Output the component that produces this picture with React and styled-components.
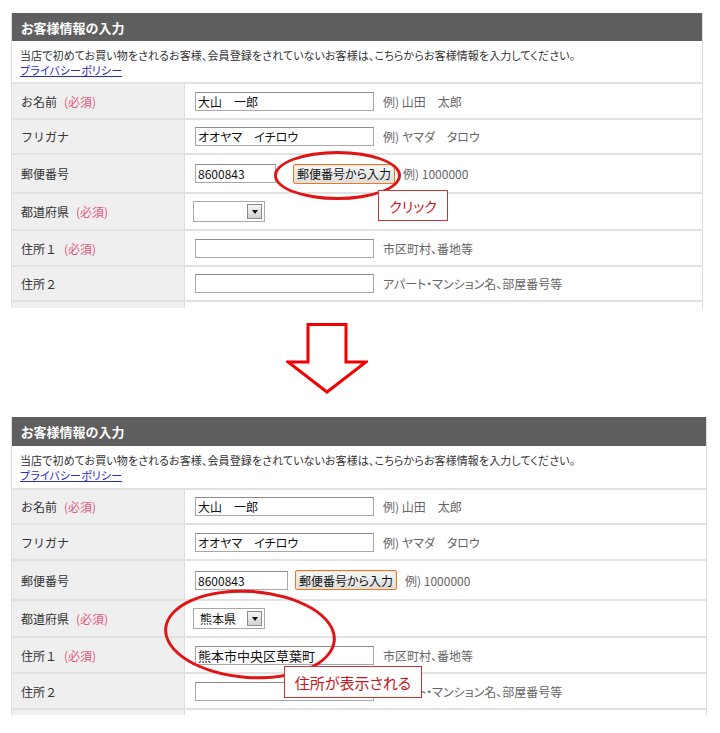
import React from 'react';
import styled, { createGlobalStyle } from 'styled-components';

const GlobalStyle = createGlobalStyle`
  html, body { margin: 0; padding: 0; background: #fff; }
  body {
    font-family: "Noto Sans CJK JP", "Noto Sans", sans-serif;
    font-size: 12px;
    color: #333;
    font-feature-settings: "palt";
  }
  * { box-sizing: border-box; }
`;

const Page = styled.div`
  width: 720px;
  height: 733px;
  overflow: hidden;
  padding: 13px 0 0 11px;
`;

const PanelWrap = styled.div`
  position: relative;
  width: ${(p) => p.$w}px;
`;

const Table = styled.div`
  height: ${(p) => p.$h}px;
  overflow: hidden;
  border-left: 1px solid #dcdcdc;
  border-right: 1px solid #dcdcdc;
`;

const Header = styled.div`
  height: ${(p) => p.$h}px;
  background: #5f5f5f;
  color: #fff;
  font-weight: bold;
  font-size: 13px;
  padding-left: 9px;
  display: flex;
  align-items: center;
`;

const Desc = styled.div`
  height: ${(p) => p.$h}px;
  padding: 7px 8px 0;
  font-size: 11px;
  letter-spacing: 0.1px;
  line-height: 15px;
  border-bottom: 2px solid #e2e2e2;
  color: #333;
`;

const Link = styled.a`
  color: #2b2bc6;
  text-decoration: underline;
`;

const Row = styled.div`
  display: grid;
  grid-template-columns: 173px 1fr;
  height: ${(p) => p.$h}px;
  border-bottom: 2px solid #e2e2e2;
`;

const Label = styled.div`
  background: #efefef;
  border-right: 1px solid #dcdcdc;
  display: flex;
  align-items: center;
  padding-left: 9px;
  gap: 7px;
  color: #333;
  font-feature-settings: normal;
`;

const Req = styled.span`
  color: #e3587c;
`;

const Value = styled.div`
  display: flex;
  align-items: center;
  padding-left: ${(p) => p.$pl ?? 10}px;
`;

const Input = styled.div`
  width: ${(p) => p.$w}px;
  height: 19px;
  border: 1px solid #a8a8a8;
  border-top-color: #8c8c8c;
  background: #fff;
  color: #111;
  display: flex;
  align-items: center;
  padding-left: 2px;
  font-size: ${(p) => p.$fs ?? 12}px;
  white-space: nowrap;
  margin-right: ${(p) => p.$mr ?? 9}px;
`;

const Hint = styled.span`
  color: #666;
  white-space: nowrap;
`;

const Button = styled.div`
  width: ${(p) => p.$w}px;
  height: 20px;
  border: 1px solid #e07a32;
  border-radius: 2px;
  background: linear-gradient(#f8f8f8, #dcdcdc);
  box-shadow: inset 0 0 0 1px #fbe0c8;
  color: #111;
  display: flex;
  align-items: center;
  justify-content: center;
  margin-right: ${(p) => p.$mr ?? 8}px;
  white-space: nowrap;
`;

const Select = styled.div`
  width: 72px;
  height: 21px;
  border: 1px solid #a8a8a8;
  background: #fff;
  display: flex;
  align-items: center;
  justify-content: space-between;
  padding: 0 2px 0 6px;
  color: #111;
`;

const DropBtn = styled.div`
  width: 15px;
  height: 15px;
  border: 1px solid #8a8a8a;
  background: linear-gradient(#f6f6f6, #d2d2d2);
  display: flex;
  align-items: center;
  justify-content: center;
  &::after {
    content: "";
    border-left: 3px solid transparent;
    border-right: 3px solid transparent;
    border-top: 4px solid #111;
  }
`;

const Ellipse = styled.div`
  position: absolute;
  left: ${(p) => p.$x}px;
  top: ${(p) => p.$y}px;
  width: ${(p) => p.$w}px;
  height: ${(p) => p.$h}px;
  border: 3px solid #e01414;
  border-radius: 50%;
  transform: rotate(${(p) => p.$r ?? 0}deg);
  pointer-events: none;
`;

const Callout = styled.div`
  position: absolute;
  left: ${(p) => p.$x}px;
  top: ${(p) => p.$y}px;
  width: ${(p) => p.$w}px;
  height: ${(p) => p.$h}px;
  border: 1px solid #c33;
  background: #fff;
  color: #c4161c;
  font-size: ${(p) => p.$fs}px;
  display: flex;
  align-items: center;
  justify-content: center;
  white-space: nowrap;
`;

const ArrowRow = styled.div`
  height: 109px;
  padding: 15px 0 0 275px;
`;

const LabelCell = ({ text, req }) => (
  <Label>
    <span>{text}</span>
    {req && <Req>(必須)</Req>}
  </Label>
);

const Panel = ({ v }) => (
  <PanelWrap $w={v.width}>
    <Table $h={v.height}>
      <Header $h={v.headerH}>お客様情報の入力</Header>
      <Desc $h={v.descH}>
        当店で初めてお買い物をされるお客様、会員登録をされていないお客様は、こちらからお客様情報を入力してください。
        <br />
        <Link href="#">プライバシーポリシー</Link>
      </Desc>
      <Row $h={v.rows[0]}>
        <LabelCell text="お名前" req />
        <Value>
          <Input $w={179}>大山　一郎</Input>
          <Hint>例) 山田　太郎</Hint>
        </Value>
      </Row>
      <Row $h={v.rows[1]}>
        <LabelCell text="フリガナ" />
        <Value>
          <Input $w={179}>オオヤマ　イチロウ</Input>
          <Hint>例) ヤマダ　タロウ</Hint>
        </Value>
      </Row>
      <Row $h={v.rows[2]}>
        <LabelCell text="郵便番号" />
        <Value>
          <Input $w={v.zipW} $mr={v.zipGap}>8600843</Input>
          <Button $w={102}>郵便番号から入力</Button>
          <Hint>例) 1000000</Hint>
        </Value>
      </Row>
      <Row $h={v.rows[3]}>
        <LabelCell text="都道府県" req />
        <Value $pl={8}>
          <Select>
            <span>{v.pref}</span>
            <DropBtn />
          </Select>
        </Value>
      </Row>
      <Row $h={v.rows[4]}>
        <LabelCell text="住所１" req />
        <Value>
          <Input $w={179} $fs={13}>{v.addr}</Input>
          <Hint>市区町村、番地等</Hint>
        </Value>
      </Row>
      <Row $h={v.rows[5]}>
        <LabelCell text="住所２" />
        <Value>
          <Input $w={179}></Input>
          <Hint>アパート・マンション名、部屋番号等</Hint>
        </Value>
      </Row>
      <Row $h={30}>
        <Label />
        <Value />
      </Row>
    </Table>
    {v.overlays}
  </PanelWrap>
);

const before = {
  width: 692,
  height: 295,
  headerH: 28,
  descH: 43,
  rows: [36, 35, 39, 37, 36, 35],
  zipW: 81,
  zipGap: 17,
  pref: '',
  addr: '',
  overlays: (
    <>
      <Ellipse $x={263} $y={138} $w={127} $h={49} />
      <Callout $x={367} $y={177} $w={70} $h={31} $fs={14}>クリック</Callout>
    </>
  ),
};

const after = {
  width: 696,
  height: 298,
  headerH: 29,
  descH: 44,
  rows: [35, 36, 40, 37, 36, 36],
  zipW: 93,
  zipGap: 7,
  pref: '熊本県',
  addr: '熊本市中央区草葉町',
  overlays: (
    <>
      <Ellipse $x={153} $y={173} $w={172} $h={89} $r={4} />
      <Callout $x={273} $y={249} $w={138} $h={32} $fs={15}>住所が表示される</Callout>
    </>
  ),
};

export default function App() {
  return (
    <>
      <GlobalStyle />
      <Page>
        <Panel v={before} />
        <ArrowRow>
          <svg width="82" height="72" viewBox="0 0 82 72">
            <polygon
              points="22,1.5 60,1.5 60,39 80,39 41,69 2,39 22,39"
              fill="#fff"
              stroke="#f20000"
              strokeWidth="3"
              strokeLinejoin="miter"
            />
          </svg>
        </ArrowRow>
        <Panel v={after} />
      </Page>
    </>
  );
}
